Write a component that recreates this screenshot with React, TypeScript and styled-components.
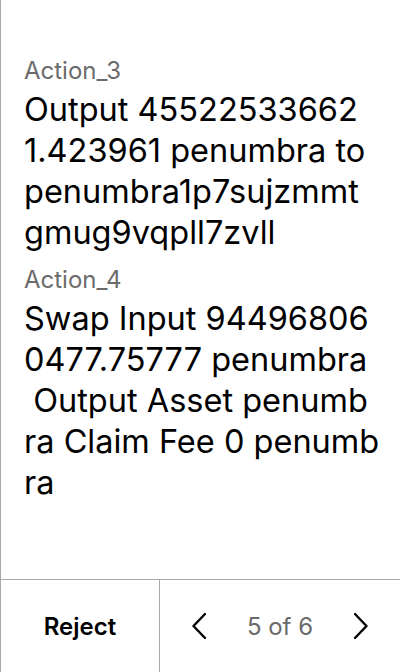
import React from "react";
import styled, { createGlobalStyle } from "styled-components";

const Global = createGlobalStyle`
  html, body { margin: 0; padding: 0; background: #fff; }
  body { font-family: Inter, "Noto Sans", sans-serif; }
`;

const Screen = styled.div`
  width: 400px;
  height: 672px;
  box-sizing: border-box;
  border-left: 1px solid #a8a8a8;
  display: flex;
  flex-direction: column;
  background: #fff;
`;

const Content = styled.div`
  flex: 1;
  padding: 56px 22px 0 23px;
  display: flex;
  flex-direction: column;
  gap: 12px;
  overflow: hidden;
`;

const Section = styled.div`
  display: flex;
  flex-direction: column;
  gap: 3px;
`;

const Label = styled.div`
  font-size: 24px;
  line-height: 30px;
  color: #6b6b6b;
`;

const Body = styled.div`
  font-size: 32.5px;
  line-height: 41px;
  color: #000;
`;

const Line = styled.span`
  display: block;
  white-space: pre;
`;

const Footer = styled.div`
  height: 92px;
  flex: none;
  border-top: 1px solid #a8a8a8;
  display: grid;
  grid-template-columns: 159px 1fr;
`;

const RejectButton = styled.button`
  border: none;
  border-right: 1px solid #a8a8a8;
  background: transparent;
  font-family: inherit;
  font-size: 24px;
  font-weight: 600;
  color: #000;
  padding: 0;
`;

const Pager = styled.div`
  display: flex;
  align-items: center;
  justify-content: space-between;
  padding: 0 32px 0 32px;
`;

const Arrow = styled.button`
  border: none;
  background: transparent;
  padding: 0;
  display: flex;
  color: #000;
`;

const Count = styled.span`
  font-size: 24px;
  color: #6b6b6b;
`;

const Chevron = ({ dir }: { dir: "left" | "right" }) => (
  <svg width="14" height="26" viewBox="0 0 14 26" fill="none">
    <polyline
      points={dir === "left" ? "13,1 1.5,13 13,25" : "1,1 12.5,13 1,25"}
      stroke="currentColor"
      strokeWidth="2.4"
      strokeLinecap="round"
      strokeLinejoin="round"
    />
  </svg>
);

const actions = [
  {
    label: "Action_3",
    lines: [
      "Output 45522533662",
      "1.423961 penumbra to",
      "penumbra1p7sujzmmt",
      "gmug9vqpll7zvll",
    ],
  },
  {
    label: "Action_4",
    lines: [
      "Swap Input 94496806",
      "0477.75777 penumbra",
      " Output Asset penumb",
      "ra Claim Fee 0 penumb",
      "ra",
    ],
  },
];

export default function App() {
  return (
    <>
      <Global />
      <Screen>
        <Content>
          {actions.map((a) => (
            <Section key={a.label}>
              <Label>{a.label}</Label>
              <Body>
                {a.lines.map((l, i) => (
                  <Line key={i}>{l}</Line>
                ))}
              </Body>
            </Section>
          ))}
        </Content>
        <Footer>
          <RejectButton>Reject</RejectButton>
          <Pager>
            <Arrow aria-label="previous">
              <Chevron dir="left" />
            </Arrow>
            <Count>5 of 6</Count>
            <Arrow aria-label="next">
              <Chevron dir="right" />
            </Arrow>
          </Pager>
        </Footer>
      </Screen>
    </>
  );
}
